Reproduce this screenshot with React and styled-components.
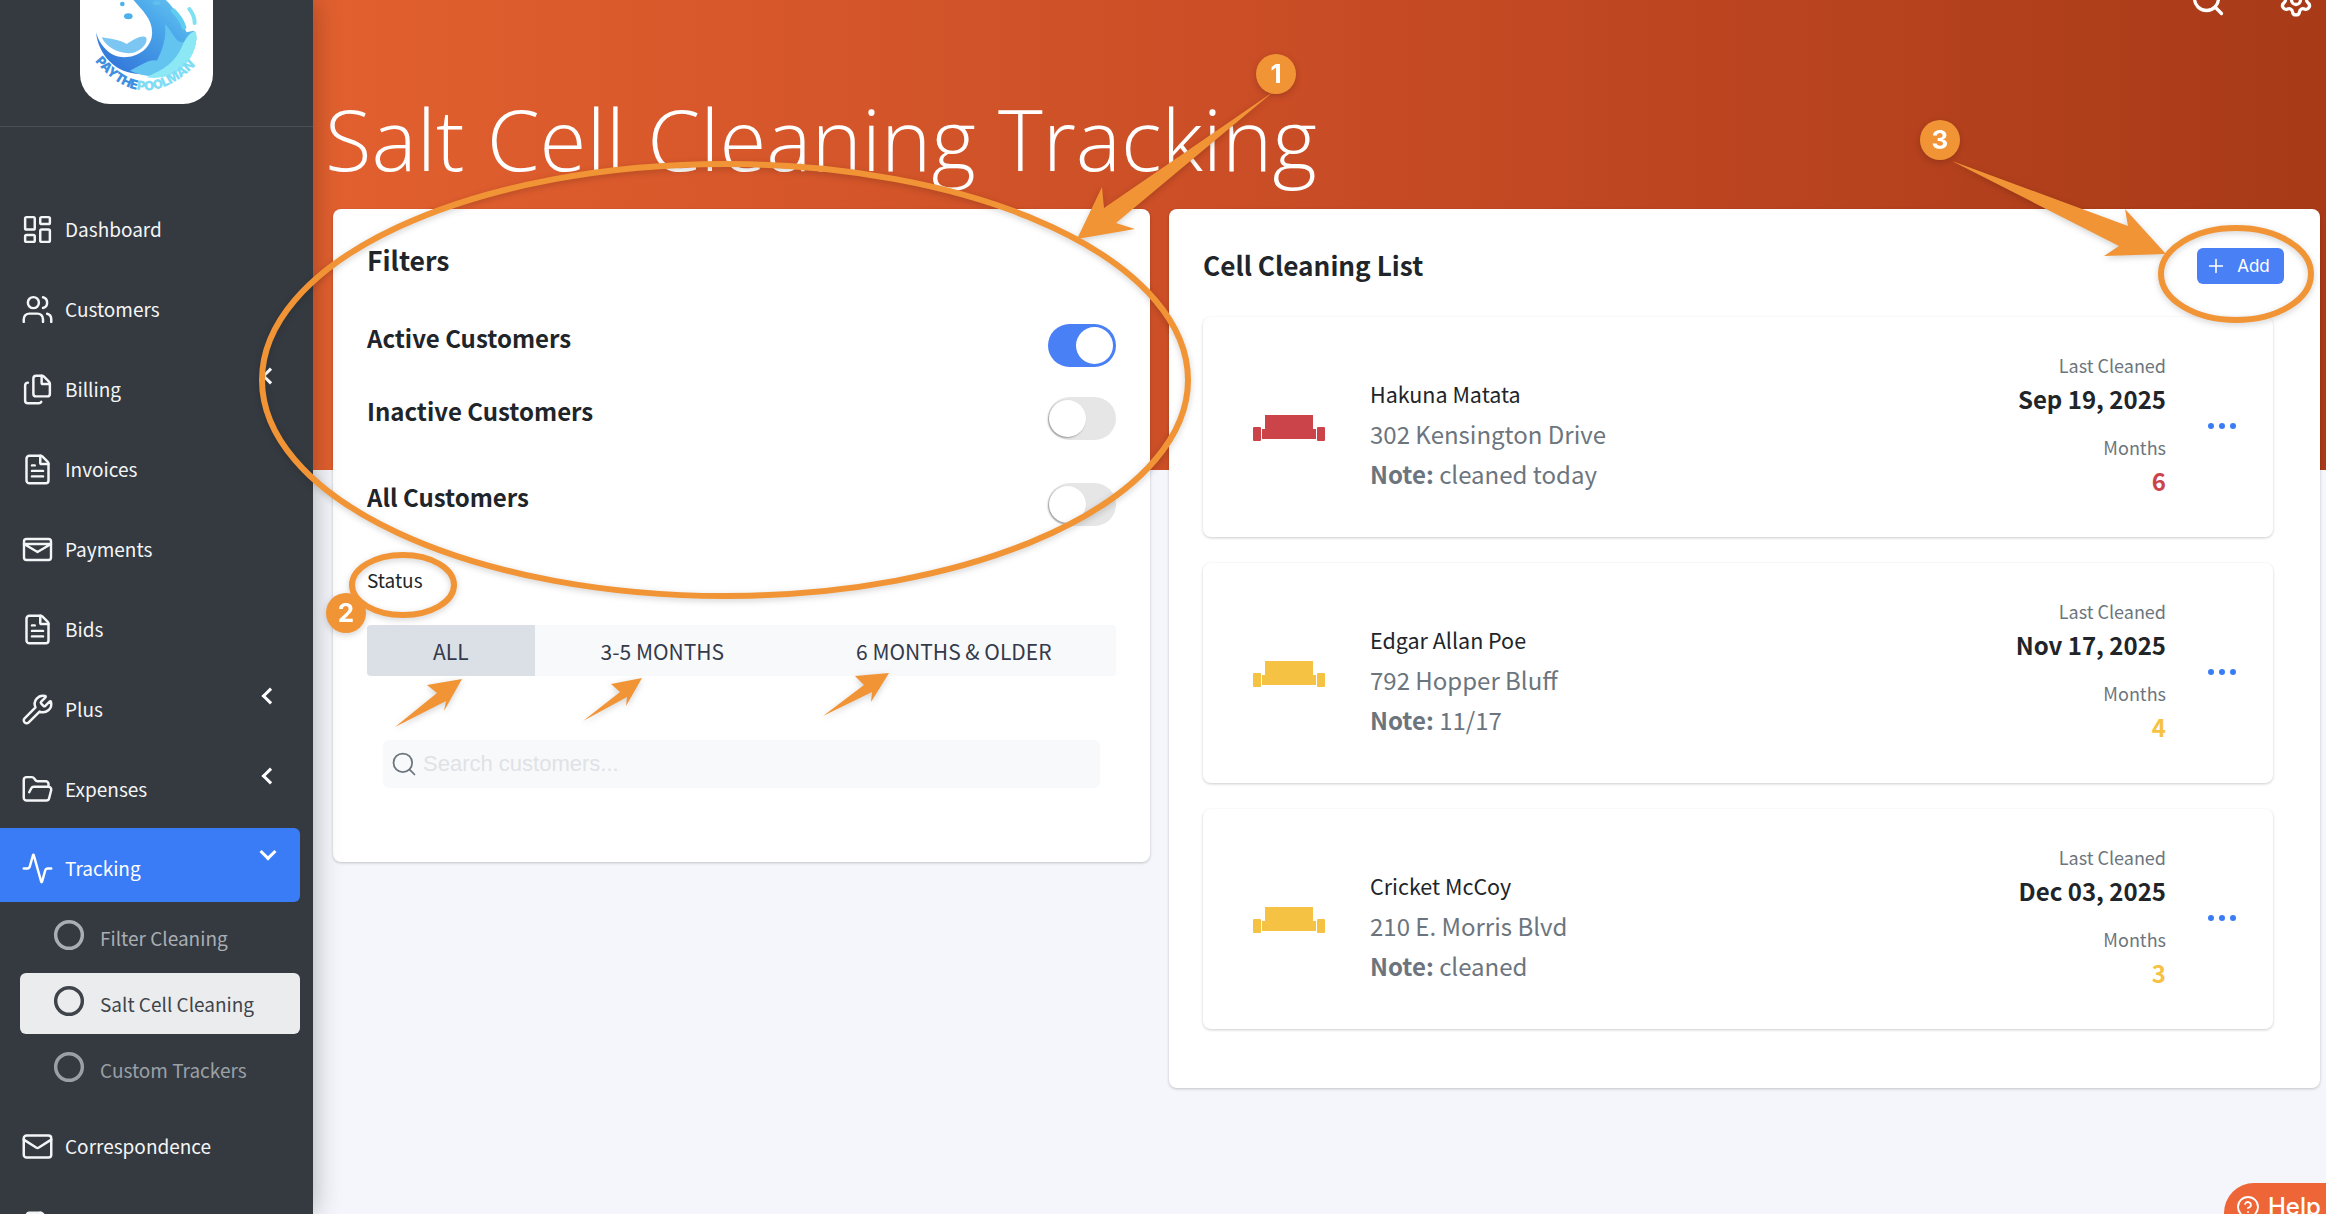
import React from "react";
import styled, { createGlobalStyle } from "styled-components";
import {
  LayoutDashboard,
  Users,
  Files,
  FileText,
  Wrench,
  FolderOpen,
  Activity,
  Mail,
  Search,
  Settings,
  Plus,
  HelpCircle,
  Circle,
  File,
} from "lucide-react";

const SOURCE = '"Noto Sans CJK SC", "Noto Sans", sans-serif';
const ORANGE = "#f19436";

const PaymentsIcon = ({ size = 30 }) => (
  <svg width={size} height={size} viewBox="0 0 33 33" fill="none" stroke="currentColor" strokeWidth="2.4" strokeLinejoin="round" strokeLinecap="round">
    <rect x="3" y="6" width="27" height="21" rx="2.5" />
    <path d="M3 11h27M3 11l13.5 8 13.5-8" />
  </svg>
);

const menu = [
  { label: "Dashboard", icon: LayoutDashboard },
  { label: "Customers", icon: Users },
  { label: "Billing", icon: Files, collapse: true },
  { label: "Invoices", icon: FileText },
  { label: "Payments", icon: PaymentsIcon },
  { label: "Bids", icon: FileText },
  { label: "Plus", icon: Wrench, chevron: true },
  { label: "Expenses", icon: FolderOpen, chevron: true },
];

const cleanings = [
  { name: "Hakuna Matata", address: "302 Kensington Drive", note: "cleaned today", date: "Sep 19, 2025", months: 6, color: "#cb444a" },
  { name: "Edgar Allan Poe", address: "792 Hopper Bluff", note: "11/17", date: "Nov 17, 2025", months: 4, color: "#f6c244" },
  { name: "Cricket McCoy", address: "210 E. Morris Blvd", note: "cleaned", date: "Dec 03, 2025", months: 3, color: "#f6c244" },
];

const filters = [
  { label: "Active Customers", on: true, gap: 30 },
  { label: "Inactive Customers", on: false, gap: 43 },
  { label: "All Customers", on: false, gap: 0 },
];

const Logo = () => (
  <svg width="133" height="133" viewBox="0 0 133 133">
    <defs>
      <linearGradient id="wave" x1="0" y1="1" x2="1" y2="0">
        <stop offset="0" stopColor="#2e6cd6" />
        <stop offset="0.6" stopColor="#4aa6ea" />
        <stop offset="1" stopColor="#6fd0f2" />
      </linearGradient>
      <path id="logoArc" d="M15 90 Q64 150 122 88" />
    </defs>
    <g transform="translate(-20 28) scale(0.3333)">
      <path d="M108 100 C115 170 170 225 240 225 C310 225 370 200 400 150 C415 120 410 100 400 95 L380 100 C350 40 320 -20 260 -20 L210 -10 C240 30 285 60 275 115 C265 165 200 190 155 165 C130 150 115 125 108 100 Z" fill="url(#wave)" />
      <path d="M125 115 C140 150 190 170 225 160 C250 150 265 130 258 115 C245 105 215 125 200 135 C185 125 160 120 125 115 Z" fill="#7bc6f2" />
      <path d="M210 215 C250 195 270 180 290 185 C310 150 320 110 315 75 C340 100 345 130 370 130 C385 120 395 105 405 100 C415 130 400 175 360 205 C320 235 260 240 210 215 Z" fill="#63c4f0" />
      <path d="M260 235 C300 215 340 200 365 145 C380 110 395 95 408 98 C415 140 395 190 350 220 C320 235 290 240 260 235 Z" fill="#8ce8f5" />
      <ellipse cx="205" cy="52" rx="13" ry="9" fill="#4fb0ee" />
      <circle cx="187" cy="15" r="7" fill="#4fb0ee" />
      <ellipse cx="290" cy="12" rx="12" ry="6" fill="#5fc0ef" />
      <path d="M340 35 C355 50 365 62 372 85" stroke="#5fcdf0" strokeWidth="14" fill="none" strokeLinecap="round" />
      <path d="M388 30 C398 42 404 56 404 72" stroke="#7fe0f2" strokeWidth="12" fill="none" strokeLinecap="round" />
    </g>
    <text fontFamily="Inter, sans-serif" fontWeight="900" fontSize="13" fill="#3f8fe0" letterSpacing="-0.35">
      <textPath href="#logoArc">PAYTHE<tspan fill="#7fdcf5">POOLMAN</tspan></textPath>
    </text>
  </svg>
);

const CellIcon = ({ color }) => (
  <svg width="72" height="26" viewBox="0 0 72 26" fill={color}>
    <rect x="12" y="0" width="48" height="18" />
    <rect x="9" y="14" width="54" height="10" />
    <rect x="0" y="12" width="8" height="14" rx="1" />
    <rect x="64" y="12" width="8" height="14" rx="1" />
  </svg>
);

const Annotations = () => (
  <Overlay width="2326" height="1214" viewBox="0 0 2326 1214">
    <g fill="none" stroke={ORANGE} strokeWidth="6">
      <ellipse cx="725" cy="380" rx="463" ry="216" />
      <ellipse cx="403" cy="585" rx="51" ry="30" />
      <ellipse cx="2236" cy="274" rx="75" ry="46" />
    </g>
    <g fill={ORANGE}>
      <polygon points="1273,92 1116,223 1135,229 1077,239 1102,187 1104,208" />
      <polygon points="1952,161 2128,226 2125,209 2166,254 2104,256 2119,246" />
      <polygon points="395,727 437,693 427,685 462,679 444,711 446,701" />
      <polygon points="583,721 620,692 611,684 642,678 626,706 627,697" />
      <polygon points="823,716 864,685 855,676 889,673 871,702 872,692" />
      <circle cx="1276" cy="74" r="20" />
      <circle cx="346" cy="613" r="20" />
      <circle cx="1940" cy="140" r="20" />
    </g>
    <g fill="#fff" fontFamily="Inter, sans-serif" fontWeight="700" fontSize="26" textAnchor="middle">
      <text x="1276" y="83">1</text>
      <text x="346" y="622">2</text>
      <text x="1940" y="149">3</text>
    </g>
  </Overlay>
);

const App = () => {
  return (
    <Page>
      <GlobalStyle />
      <Sidebar>
        <LogoBar>
          <LogoTile>
            <Logo />
          </LogoTile>
        </LogoBar>
        <Nav>
          {menu.map((item) => (
            <NavItem key={item.label}>
              <item.icon size={33} strokeWidth={1.8} />
              <NavLabel>{item.label}</NavLabel>
              {item.chevron && <ChevronLeft />}
              {item.collapse && <ChevronLeft />}
            </NavItem>
          ))}
          <ActiveItem>
            <Activity size={33} strokeWidth={1.8} />
            <NavLabel>Tracking</NavLabel>
            <ChevronDown />
          </ActiveItem>
          <SubNav>
            <SubItem>
              <Circle size={32} strokeWidth={2.6} />
              <span>Filter Cleaning</span>
            </SubItem>
            <SubItem $selected>
              <Circle size={32} strokeWidth={2.6} />
              <span>Salt Cell Cleaning</span>
            </SubItem>
            <SubItem $dim>
              <Circle size={32} strokeWidth={2.6} />
              <span>Custom Trackers</span>
            </SubItem>
          </SubNav>
          <NavItem>
            <Mail size={33} strokeWidth={1.8} />
            <NavLabel>Correspondence</NavLabel>
          </NavItem>
          <NavItem>
            <File size={33} strokeWidth={1.8} />
          </NavItem>
        </Nav>
      </Sidebar>

      <Main>
        <Hero>
          <TopIcons>
            <Search size={36} strokeWidth={2.2} />
            <Settings size={36} strokeWidth={2.2} />
          </TopIcons>
          <Title>Salt Cell Cleaning Tracking</Title>
        </Hero>
        <Cards>
          <FilterCard>
            <FilterHeading>Filters</FilterHeading>
            {filters.map((f) => (
              <FilterRow key={f.label} style={{ marginBottom: f.gap }}>
                <FilterLabel>{f.label}</FilterLabel>
                <Toggle $on={f.on} />
              </FilterRow>
            ))}
            <StatusLabel>Status</StatusLabel>
            <Tabs>
              <Tab $active>ALL</Tab>
              <Tab>3-5 MONTHS</Tab>
              <Tab>6 MONTHS &amp; OLDER</Tab>
            </Tabs>
            <SearchBox>
              <Search size={28} strokeWidth={1.5} color="#6c757d" />
              <SearchInput placeholder="Search customers..." readOnly />
            </SearchBox>
          </FilterCard>

          <ListCard>
            <ListHeader>
              <ListTitle>Cell Cleaning List</ListTitle>
              <AddButton>
                <Plus size={22} strokeWidth={1.7} />
                Add
              </AddButton>
            </ListHeader>
            <List>
              {cleanings.map((c) => (
                <Row key={c.name}>
                  <IconCell>
                    <CellIcon color={c.color} />
                  </IconCell>
                  <Details>
                    <Name>{c.name}</Name>
                    <Address>{c.address}</Address>
                    <Address>
                      <strong>Note:</strong> {c.note}
                    </Address>
                  </Details>
                  <Stats>
                    <StatLabel>Last Cleaned</StatLabel>
                    <StatDate>{c.date}</StatDate>
                    <StatLabel>Months</StatLabel>
                    <StatDate style={{ color: c.color }}>{c.months}</StatDate>
                  </Stats>
                  <Dots>
                    <i />
                    <i />
                    <i />
                  </Dots>
                </Row>
              ))}
            </List>
          </ListCard>
        </Cards>
        <HelpTab>
          <HelpCircle size={24} strokeWidth={1.8} />
          Help
        </HelpTab>
      </Main>
      <Annotations />
    </Page>
  );
};

const GlobalStyle = createGlobalStyle`
  html, body {
    margin: 0;
    padding: 0;
    height: 100%;
    overflow: hidden;
    font-family: ${SOURCE};
  }
`;

const Page = styled.div`
  position: relative;
  display: flex;
  width: 2326px;
  height: 1214px;
  overflow: hidden;
  background: #f4f6fb;
`;

const Overlay = styled.svg`
  position: absolute;
  top: 0;
  left: 0;
  z-index: 10;
  pointer-events: none;
  filter: drop-shadow(0 2px 3px rgba(0, 0, 0, 0.18));
`;

const Sidebar = styled.aside`
  position: relative;
  z-index: 2;
  flex: 0 0 313px;
  background: #353a41;
  color: #fff;
  box-shadow: 0 0 26px rgba(0, 0, 0, 0.3);
`;

const LogoBar = styled.div`
  height: 127px;
  box-sizing: border-box;
  display: flex;
  justify-content: center;
  align-items: flex-end;
  padding: 0 20px 22px 0;
  border-bottom: 1px solid #4a4f56;
`;

const LogoTile = styled.div`
  flex: 0 0 133px;
  height: 133px;
  background: #fff;
  border-radius: 30px;
  overflow: hidden;
`;

const Nav = styled.nav`
  padding-top: 62px;
`;

const NavItem = styled.div`
  position: relative;
  display: flex;
  align-items: center;
  gap: 11px;
  height: 80px;
  padding-left: 21px;
  font-size: 19px;
  color: #f4f5f6;
  svg {
    flex: none;
  }
`;

const ActiveItem = styled(NavItem)`
  width: 300px;
  height: 74px;
  box-sizing: border-box;
  margin-top: -1px;
  padding-top: 6px;
  background: #3a7cf6;
  border-radius: 0 6px 6px 0;
  color: #fff;
`;

const NavLabel = styled.span`
  line-height: 1;
  margin-top: -2px;
`;

const Chevron = styled.span`
  position: absolute;
  width: 9px;
  height: 9px;
  border-left: 3.5px solid #fff;
  border-bottom: 3.5px solid #fff;
`;

const ChevronLeft = styled(Chevron)`
  top: 21px;
  left: 264px;
  transform: rotate(45deg);
`;

const ChevronDown = styled(Chevron)`
  top: 18px;
  left: 262px;
  transform: rotate(-45deg);
`;

const SubNav = styled.div`
  display: flex;
  flex-direction: column;
  gap: 5px;
  padding: 5px 0 6px 20px;
  width: 280px;
`;

const SubItem = styled.div`
  display: flex;
  align-items: center;
  gap: 15px;
  height: 61px;
  padding-left: 33px;
  border-radius: 6px;
  font-size: 19px;
  background: ${({ $selected }) => ($selected ? "#ebecee" : "transparent")};
  color: ${({ $selected, $dim }) => ($selected ? "#3f444a" : $dim ? "#9ba0a6" : "#a9aeb4")};
  svg {
    flex: none;
    margin-top: -6px;
  }
`;

const Main = styled.main`
  position: relative;
  flex: 1;
  min-width: 0;
`;

const Hero = styled.div`
  height: 470px;
  box-sizing: border-box;
  padding: 0 0 0 12px;
  background: linear-gradient(90deg, #e2602f 0%, #c84c25 50%, #a83a18 100%);
  color: #fff;
  overflow: hidden;
`;

const TopIcons = styled.div`
  display: flex;
  justify-content: flex-end;
  gap: 52px;
  height: 18px;
  margin-top: -18px;
  padding-right: 12px;
`;

const Title = styled.h1`
  margin: 87px 0 0;
  font-family: "Open Sans", sans-serif;
  font-weight: 300;
  font-size: 85.3px;
  line-height: 1.2;
  white-space: nowrap;
`;

const Cards = styled.div`
  display: grid;
  grid-template-columns: 817px 1151px;
  gap: 19px;
  align-items: start;
  margin: -261px 0 0 20px;
`;

const Card = styled.section`
  background: #fff;
  border-radius: 8px;
  box-shadow: 0 1px 3px rgba(0, 0, 0, 0.22);
  box-sizing: border-box;
`;

const FilterCard = styled(Card)`
  height: 653px;
  padding: 33px 34px 0;
  color: #212529;
`;

const FilterHeading = styled.h3`
  margin: 0 0 45px;
  font-size: 26.5px;
  line-height: 36px;
  font-weight: 700;
`;

const FilterRow = styled.div`
  display: flex;
  justify-content: space-between;
  align-items: flex-start;
  height: 43px;
`;

const FilterLabel = styled.span`
  font-size: 24px;
  line-height: 30px;
  font-weight: 700;
`;

const Toggle = styled.span`
  position: relative;
  display: block;
  margin-top: 1px;
  width: 68px;
  height: 43px;
  border-radius: 22px;
  background: ${({ $on }) => ($on ? "#4a80f5" : "#e6e6e6")};
  &::after {
    content: "";
    position: absolute;
    top: 3px;
    bottom: 3px;
    width: 37px;
    border-radius: 50%;
    background: #fff;
    left: ${({ $on }) => ($on ? "28px" : "1px")};
    box-shadow: ${({ $on }) => ($on ? "none" : "-1px 1px 2px rgba(0, 0, 0, 0.35)")};
  }
`;

const StatusLabel = styled.div`
  margin-top: 41px;
  font-size: 19px;
  line-height: 28px;
`;

const Tabs = styled.div`
  display: flex;
  margin-top: 31px;
  height: 51px;
  background: #f8f9fa;
  border-radius: 4px;
`;

const Tab = styled.div`
  display: flex;
  align-items: center;
  padding: 0 66px;
  font-size: 21px;
  color: #343a4a;
  white-space: nowrap;
  background: ${({ $active }) => ($active ? "#dae0e5" : "transparent")};
  border-radius: ${({ $active }) => ($active ? "4px 0 0 4px" : "0")};
`;

const SearchBox = styled.div`
  display: flex;
  align-items: center;
  gap: 5px;
  height: 48px;
  margin: 64px 16px 0;
  padding-left: 7px;
  background: #f8f9fa;
  border-radius: 6px;
`;

const SearchInput = styled.input`
  flex: 1;
  border: none;
  outline: none;
  background: transparent;
  font-family: "Liberation Sans", Arial, sans-serif;
  font-size: 22px;
  padding: 0;
  &::placeholder {
    color: #dfe2e6;
    opacity: 1;
  }
`;

const ListCard = styled(Card)`
  height: 879px;
  padding: 0 47px 0 34px;
`;

const ListHeader = styled.div`
  display: flex;
  justify-content: space-between;
  align-items: center;
  height: 108px;
  padding-right: 2px;
`;

const ListTitle = styled.h3`
  margin: 4px 0 0;
  font-size: 26.2px;
  font-weight: 700;
  color: #212529;
`;

const AddButton = styled.button`
  display: flex;
  align-items: center;
  justify-content: center;
  gap: 10px;
  width: 87px;
  height: 36px;
  margin: 6px -13px 0 0;
  padding: 0 6px 0 0;
  border: none;
  border-radius: 6px;
  background: #4a80f5;
  color: #fff;
  font-family: Inter, sans-serif;
  font-size: 17px;
`;

const List = styled.div`
  display: flex;
  flex-direction: column;
  gap: 26px;
`;

const Row = styled.article`
  display: flex;
  align-items: center;
  height: 220px;
  box-sizing: border-box;
  background: #fff;
  border-radius: 8px;
  box-shadow: 0 1px 3px rgba(0, 0, 0, 0.2);
`;

const IconCell = styled.div`
  flex: 0 0 167px;
  display: flex;
  justify-content: center;
  padding-left: 5px;
  box-sizing: border-box;
  margin-top: 2px;
`;

const Details = styled.div`
  flex: 1;
  display: flex;
  flex-direction: column;
  gap: 8px;
  margin-top: 13px;
`;

const Name = styled.div`
  font-size: 21.5px;
  line-height: 32px;
  color: #212529;
`;

const Address = styled.div`
  font-size: 24px;
  line-height: 32px;
  color: #6c757d;
  strong {
    font-weight: 700;
  }
`;

const Stats = styled.div`
  display: flex;
  flex-direction: column;
  align-items: flex-end;
  width: 200px;
  margin-top: -9px;
`;

const StatLabel = styled.div`
  font-size: 18px;
  line-height: 34px;
  color: #6c757d;
`;

const StatDate = styled.div`
  font-size: 24px;
  line-height: 34px;
  font-weight: 700;
  color: #212529;
  margin-bottom: 14px;
  &:last-child {
    margin-bottom: 0;
  }
`;

const Dots = styled.div`
  display: flex;
  gap: 5px;
  margin: -3px 37px 0 42px;
  i {
    width: 6px;
    height: 6px;
    border-radius: 50%;
    background: #3a7cf6;
  }
`;

const HelpTab = styled.div`
  position: absolute;
  left: 1911px;
  top: 1183px;
  display: flex;
  align-items: center;
  gap: 8px;
  width: 130px;
  height: 60px;
  padding: 0 0 13px 12px;
  box-sizing: border-box;
  border-radius: 30px 0 0 0;
  background: #ee6637;
  color: #fff;
  font-family: Inter, sans-serif;
  font-size: 24px;
  font-weight: 500;
`;

export default App;
